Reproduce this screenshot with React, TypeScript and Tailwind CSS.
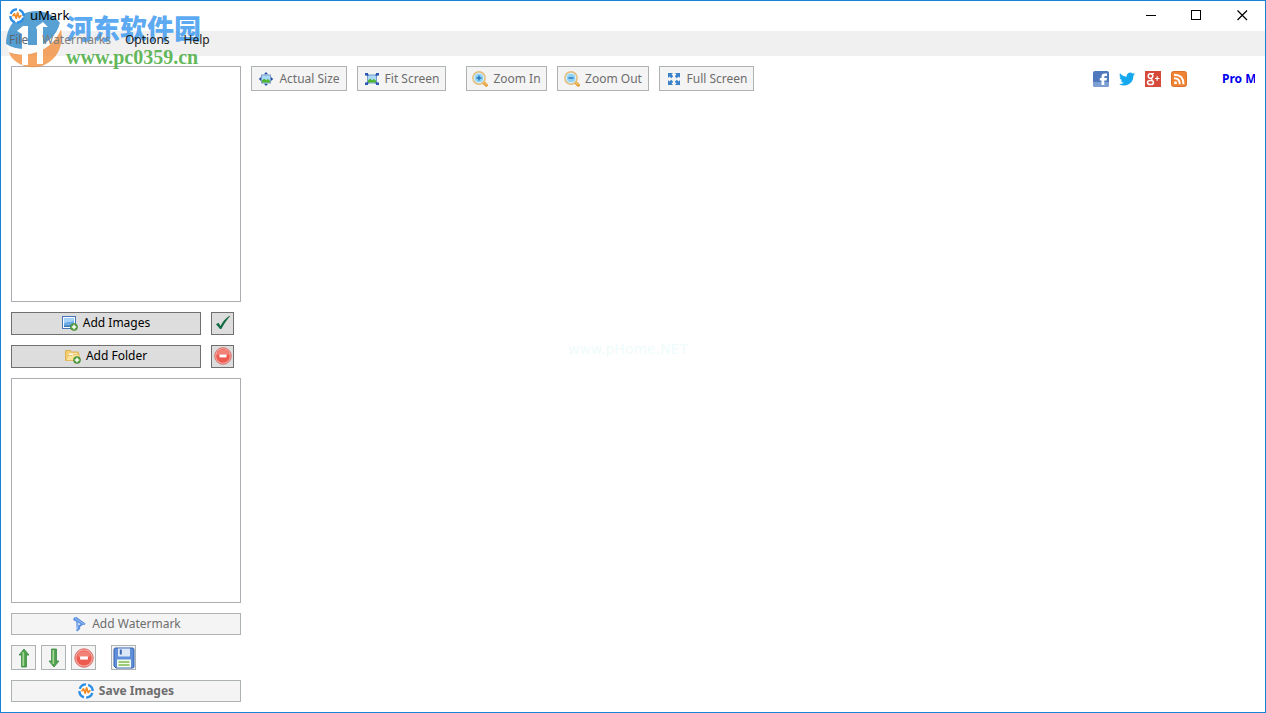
import type { ReactNode } from 'react';

interface IconProps {
  className?: string;
}

function LogoIcon({ className = 'size-4' }: IconProps) {
  return (
    <svg viewBox="0 0 16 16" className={className} fill="none">
      <circle cx="8" cy="8" r="6.3" fill="#fff" />
      <circle
        cx="8"
        cy="8"
        r="6.6"
        stroke="#2e8fe6"
        strokeWidth="2.4"
        strokeDasharray="8.2 2.17"
        strokeDashoffset="-2"
      />
      <path
        d="M3.6 8.2l1.9-2.4 1.7 4.4 1.4-5.4 1.6 4.8 2.2-2.4"
        stroke="#f28a24"
        strokeWidth="1.7"
        strokeLinejoin="round"
      />
    </svg>
  );
}

function Picture() {
  return (
    <>
      <rect x="3.5" y="4" width="9" height="8" fill="#a9d8f8" stroke="#7b9fc4" />
      <path d="M4 11.5V9.3l2.2-1.6 2 1.6 1.6-1.2 2.2 1.6v1.8z" fill="#4fb52f" />
    </>
  );
}

function ActualSizeIcon() {
  return (
    <svg viewBox="0 0 16 16" className="size-4">
      <Picture />
      <path
        d="M8 1l2 2.200H6zM8 15l2-2.200H6zM.8 8L3 6v4zM15.200 8L13 6v4z"
        fill="#2348a8"
      />
    </svg>
  );
}

function FitScreenIcon() {
  return (
    <svg viewBox="0 0 16 16" className="size-4">
      <Picture />
      <path
        d="M1 2h3v1.2L5 4 3.5 5.2 2.5 4.500H1zM15 2h-3v1.200L11 4l1.500 1.200 1-.7H15zM1 14h3v-1.200L5 12l-1.500-1.200-1 .7H1zM15 14h-3v-1.200L11 12l1.500-1.200 1 .7H15z"
        fill="#2c55b4"
      />
    </svg>
  );
}

function ZoomIcon({ plus }: { plus?: boolean }) {
  return (
    <svg viewBox="0 0 16 16" className="size-4">
      <path d="M11.500 11.500l2.800 2.600" stroke="#e09a34" strokeWidth="3.200" strokeLinecap="round" />
      <path d="M11.600 11.200l2.700 2.400" stroke="#f9c765" strokeWidth="1.200" strokeLinecap="round" />
      <circle cx="7" cy="7" r="6.100" fill="#8fd2f5" stroke="#e6be7c" strokeWidth="1.600" />
      <circle cx="7" cy="7" r="4.800" fill="none" stroke="#e5f5fd" strokeWidth="1" />
      <path d={plus ? 'M4.500 7h5M7 4.500v5' : 'M4.500 7h5'} stroke="#2474b8" strokeWidth="1.400" />
    </svg>
  );
}

function FullScreenIcon() {
  return (
    <svg viewBox="0 0 16 16" className="size-4" fill="#3a80cb">
      <path d="M2 2h5L5.600 3.400 7.200 5.200 5.200 7.200 3.400 5.600 2 7z" />
      <path d="M14 2H9l1.400 1.400-1.600 1.800 2 2 1.800-1.600L14 7z" />
      <path d="M2 14h5l-1.400-1.400 1.600-1.800-2-2-1.800 1.600L2 9z" />
      <path d="M14 14H9l1.400-1.400-1.600-1.800 2-2 1.800 1.600L14 9z" />
    </svg>
  );
}

function PlusBadge() {
  return (
    <>
      <circle cx="12" cy="12" r="3.500" fill="#5ba540" stroke="#37752a" strokeWidth=".6" />
      <path d="M9.800 12h4.400M12 9.800v4.400" stroke="#fff" strokeWidth="1.400" />
    </>
  );
}

function AddImagesIcon() {
  return (
    <svg viewBox="0 0 16 16" className="size-4">
      <rect x=".5" y="1.500" width="13" height="12" fill="#f4faff" stroke="#4777b5" />
      <rect x="2" y="3" width="10" height="9" fill="#6aabe6" />
      <path d="M2 8.500c4-3 6 0 10-3V3H2z" fill="#a6d1f6" />
      <path d="M2 10.500h10V12H2z" fill="#3f79b5" />
      <PlusBadge />
    </svg>
  );
}

function AddFolderIcon() {
  return (
    <svg viewBox="0 0 16 16" className="size-4">
      <path d="M.5 12.500v-10h5l1 1.500h7v8.500z" fill="#f4cf70" stroke="#dcb055" />
      <path d="M4 5.500h8v3H4z" fill="#fff" />
      <path d="M.8 12.500L3 7.500h4l1-1h6.500l-1 6z" fill="#fbe49a" stroke="#e3b95c" strokeWidth=".8" />
      <PlusBadge />
    </svg>
  );
}

function CheckIcon() {
  return (
    <svg viewBox="0 0 16 16" className="size-4">
      <path d="M1 9.300l2.500-1.600 2 3.200C7.600 7 10.300 3.500 14.500.8l.5.4C11.500 5 9 9.300 6.400 14H5z" fill="#156b43" />
    </svg>
  );
}

function RemoveIcon({ className = 'size-[18px]' }: IconProps) {
  return (
    <svg viewBox="0 0 18 18" className={className}>
      <circle cx="9" cy="9" r="8.300" fill="#f7a79f" stroke="#d2605a" strokeWidth=".8" />
      <circle cx="9" cy="9" r="6.800" fill="#ec5a50" />
      <path d="M3 7.500a6.200 6.200 0 0 1 12 0q-6 2.500-12 0z" fill="#f28178" />
      <path d="M5.500 7.600h7v2.800h-7z" fill="#fff" />
    </svg>
  );
}

function WatermarkIcon() {
  return (
    <svg viewBox="0 0 16 16" className="size-4">
      <path
        d="M3 1.500L5.500 1 14.500 7.500l-.8 1.600-1.700-.4-3 2.300.2 2-3 2.500-1.200-1.300L5.700 13 5 5.500 2 4z"
        fill="#5f93e2"
      />
      <path d="M7 6.700l.5 2.800 2-1.500z" fill="#f3f3f3" />
      <path d="M4 2.500l9 5.500M5.800 5.500l1 8" stroke="#9dc0f5" strokeWidth=".9" />
    </svg>
  );
}

function ArrowIcon({ down }: { down?: boolean }) {
  return (
    <svg viewBox="0 0 12 20" className="h-5 w-3">
      <path
        d={down ? 'M3.500 1h5v12H11l-5 6-5-6h2.500z' : 'M3.500 19h5V7H11L6 1 1 7h2.500z'}
        fill="#4fa04c"
        stroke="#3b8a42"
        strokeWidth=".8"
      />
      <path d={down ? 'M5.300 2v14' : 'M5.300 18V4'} stroke="#a4d698" strokeWidth="1.700" />
    </svg>
  );
}

function FloppyIcon() {
  return (
    <svg viewBox="0 0 22 22" className="size-[22px]">
      <path d="M1 2.500Q1 1 2.500 1h17Q21 1 21 2.500v17q0 1.500-1.500 1.500H3l-2-2z" fill="#5f8fd9" stroke="#3561ad" />
      <path d="M5 1.500h12v8H5z" fill="#dbe7f7" />
      <path d="M6.800 2.500h2v5h-2z" fill="#3c68b4" />
      <path d="M4 12.500h14v8H4z" fill="#f5f9ee" />
      <path d="M5.500 15h11M5.500 18h11" stroke="#9ccb78" strokeWidth="2" />
    </svg>
  );
}

function FacebookIcon() {
  return (
    <svg viewBox="0 0 16 16" className="size-4">
      <rect width="16" height="16" rx="2" fill="#5079bd" />
      <path d="M0 11h16v3q0 2-2 2H2q-2 0-2-2z" fill="#7d9fd4" />
      <path d="M8.500 14V9.500H6.800V7h1.700V5.500Q8.500 2.500 11.500 2.500H14V5h-1.700q-1 0-1 1v1H14l-.4 2.500h-2.300V14z" fill="#fff" />
    </svg>
  );
}

function TwitterIcon() {
  return (
    <svg viewBox="0 0 24 24" className="size-4" fill="#15a8ee">
      <path d="M24 4.600a10 10 0 0 1-2.800.8 5 5 0 0 0 2.100-2.700 10 10 0 0 1-3.100 1.200 4.900 4.900 0 0 0-8.400 4.500A14 14 0 0 1 1.700 3.200a4.900 4.900 0 0 0 1.500 6.500 5 5 0 0 1-2.200-.6 4.900 4.900 0 0 0 3.900 4.900 5 5 0 0 1-2.200.1 4.900 4.900 0 0 0 4.600 3.400A10 10 0 0 1 0 19.500a14 14 0 0 0 21.500-12.400A10 10 0 0 0 24 4.600z" />
    </svg>
  );
}

function GooglePlusIcon() {
  return (
    <svg viewBox="0 0 16 16" className="size-4" fill="none">
      <path d="M0 0h16v16H0z" fill="#d64a3b" />
      <circle cx="5.500" cy="5" r="2.300" stroke="#fff" strokeWidth="1.500" />
      <ellipse cx="5.500" cy="11.500" rx="3" ry="2.100" stroke="#fff" strokeWidth="1.500" />
      <path d="M5.500 2.500H9M6 7l1.500 2.500M10 7.500h4.500M12.200 5.200v4.600" stroke="#fff" strokeWidth="1.200" />
    </svg>
  );
}

function RssIcon() {
  return (
    <svg viewBox="0 0 16 16" className="size-4" fill="none">
      <rect x=".5" y=".5" width="15" height="15" rx="2" fill="#ef8233" stroke="#d9712b" />
      <circle cx="4.500" cy="11.700" r="1.500" fill="#fff" />
      <path d="M3 7.300q5.800 0 5.800 5.900M3 3.800q9.500 0 9.500 9.400" stroke="#fff" strokeWidth="1.900" />
    </svg>
  );
}

interface ActionButtonProps {
  icon: ReactNode;
  children: ReactNode;
  className: string;
}

function ActionButton({ icon, children, className }: ActionButtonProps) {
  return (
    <button
      type="button"
      className={`flex shrink-0 items-center justify-center gap-[5px] border leading-4 ${className}`}
    >
      {icon}
      <span>{children}</span>
    </button>
  );
}

interface IconButtonProps {
  label: string;
  children: ReactNode;
  className: string;
}

function IconButton({ label, children, className }: IconButtonProps) {
  return (
    <button
      type="button"
      aria-label={label}
      className={`flex shrink-0 items-center justify-center border ${className}`}
    >
      {children}
    </button>
  );
}

const enabled = 'border-[#707070] bg-[#dddddd] text-black';
const muted = 'border-[#adb2b5] bg-[#f4f4f4] text-[#6d6d6d]';

const menus = [
  { name: 'File', color: 'text-[#5c6670]' },
  { name: 'Watermarks', color: 'text-[#808080]' },
  { name: 'Options', color: 'text-[#202020]' },
  { name: 'Help', color: 'text-[#202020]' },
];

const socials = [
  { name: 'Facebook', icon: <FacebookIcon /> },
  { name: 'Twitter', icon: <TwitterIcon /> },
  { name: 'Google Plus', icon: <GooglePlusIcon /> },
  { name: 'RSS', icon: <RssIcon /> },
];

function TitleBar() {
  return (
    <header className="flex h-[30px] shrink-0 items-center pb-px pl-2">
      <LogoIcon className="relative z-10 size-4" />
      <h1 className="relative z-10 ml-[5px] flex-1 text-[13px]">uMark</h1>
      <button type="button" aria-label="Minimize" className="flex h-full w-[45px] items-center justify-center">
        <svg viewBox="0 0 11 11" className="size-[11px]" stroke="#000" shapeRendering="crispEdges">
          <path d="M0 5.500h10" />
        </svg>
      </button>
      <button type="button" aria-label="Maximize" className="flex h-full w-[45px] items-center justify-center">
        <svg viewBox="0 0 11 11" className="size-[11px]" fill="none" stroke="#000" shapeRendering="crispEdges">
          <path d="M.5.5h9v9h-9z" />
        </svg>
      </button>
      <button type="button" aria-label="Close" className="flex h-full w-[46px] items-center justify-center">
        <svg viewBox="0 0 11 11" className="size-[11px]" stroke="#000" strokeWidth="1.200">
          <path d="M.5.5l9.500 9.500M10 .5L.5 10" />
        </svg>
      </button>
    </header>
  );
}

function MenuBar() {
  return (
    <nav className="flex h-[25px] shrink-0 items-start gap-[14px] bg-[#f0f0f0] pl-2 leading-[18px]">
      {menus.map((menu) => (
        <button type="button" key={menu.name} className={`relative z-10 ${menu.color}`}>
          {menu.name}
        </button>
      ))}
    </nav>
  );
}

function Sidebar() {
  return (
    <aside className="flex w-[230px] shrink-0 flex-col gap-[10px]">
      <div role="listbox" aria-label="Images" className="h-[236px] shrink-0 border border-[#abadb3]" />
      <div className="flex gap-[10px]">
        <ActionButton icon={<AddImagesIcon />} className={`h-[23px] w-[190px] pb-px ${enabled}`}>
          Add Images
        </ActionButton>
        <IconButton label="Check all" className={`size-[23px] pb-px ${enabled}`}>
          <CheckIcon />
        </IconButton>
      </div>
      <div className="flex gap-[10px]">
        <ActionButton icon={<AddFolderIcon />} className={`h-[23px] w-[190px] pb-px ${enabled}`}>
          Add Folder
        </ActionButton>
        <IconButton label="Remove image" className={`size-[23px] pb-px ${enabled}`}>
          <RemoveIcon />
        </IconButton>
      </div>
      <div role="listbox" aria-label="Watermarks" className="min-h-40 flex-1 border border-[#abadb3]" />
      <ActionButton icon={<WatermarkIcon />} className={`h-[22px] pb-px ${muted}`}>
        Add Watermark
      </ActionButton>
      <div className="flex gap-[5px]">
        <IconButton label="Move up" className={`size-[25px] ${muted}`}>
          <ArrowIcon />
        </IconButton>
        <IconButton label="Move down" className={`size-[25px] ${muted}`}>
          <ArrowIcon down />
        </IconButton>
        <IconButton label="Remove watermark" className={`size-[25px] ${muted}`}>
          <RemoveIcon className="size-5" />
        </IconButton>
        <IconButton label="Save watermark" className={`ml-[10px] size-[25px] ${muted}`}>
          <FloppyIcon />
        </IconButton>
      </div>
      <ActionButton icon={<LogoIcon />} className={`h-[22px] pb-px font-bold ${muted}`}>
        Save Images
      </ActionButton>
    </aside>
  );
}

function Toolbar() {
  return (
    <div className="flex h-[25px] items-center">
      <div className="flex h-full gap-[10px]">
        <ActionButton icon={<ActualSizeIcon />} className={`w-24 ${muted}`}>
          Actual Size
        </ActionButton>
        <ActionButton icon={<FitScreenIcon />} className={`w-[89px] ${muted}`}>
          Fit Screen
        </ActionButton>
        <ActionButton icon={<ZoomIcon plus />} className={`ml-[10px] w-[81px] ${muted}`}>
          Zoom In
        </ActionButton>
        <ActionButton icon={<ZoomIcon />} className={`w-[92px] ${muted}`}>
          Zoom Out
        </ActionButton>
        <ActionButton icon={<FullScreenIcon />} className={`w-[95px] ${muted}`}>
          Full Screen
        </ActionButton>
      </div>
      <div className="ml-auto flex gap-[10px]">
        {socials.map((item) => (
          <a href="#" key={item.name} aria-label={item.name}>
            {item.icon}
          </a>
        ))}
      </div>
      <a href="#" className="ml-[35px] w-[33px] overflow-hidden whitespace-nowrap font-bold text-[#0000ee]">
        Pro Mode
      </a>
    </div>
  );
}

function SiteStamp() {
  return (
    <div className="pointer-events-none absolute left-1 top-[9px] flex gap-[3px]">
      <svg viewBox="0 0 58 58" className="size-[58px] opacity-80">
        <path d="M1 34C1 15 14 1 31 1C42 1 50 6 55 13C52 26 41 35 28 38C18 40 8 39 1 34z" fill="#2f8acb" />
        <path d="M4 42C18 48 46 44 56 19C59 36 52 48 41 54C33 59 20 58 13 53C8 50 5 46 4 42z" fill="#f3913f" />
        <path d="M1 34C8 39 18 40 28 38C41 35 52 26 55 13L56 19C46 44 18 48 4 42z" fill="#fff" />
        <path d="M12 21L18 16H23V55H17V24zM31 17L38 12L43 17H38V54H32V39H23V35H32V20z" fill="#fff" />
      </svg>
      <div className="whitespace-nowrap">
        <p className="pt-[2px] font-['Noto_Sans_CJK_SC',sans-serif] text-[27px] font-black leading-[32px] text-[#3f9bf0]/85">
          河东软件园
        </p>
        <p className="pt-[2px] font-['Liberation_Serif',serif] text-[20px] font-bold leading-[22px] text-[#4fae45]/90">
          www.pc0359.cn
        </p>
      </div>
    </div>
  );
}

function App() {
  return (
    <div className="relative flex min-h-screen flex-col border border-[#1883d7] bg-white font-['Noto_Sans',sans-serif] text-[12px] text-black">
      <TitleBar />
      <MenuBar />
      <div className="flex flex-1 gap-[10px] p-[10px]">
        <Sidebar />
        <main className="flex min-w-0 flex-1 flex-col">
          <Toolbar />
          <div className="flex flex-1 justify-center pt-[248px]">
            <p className="mr-[250px] font-['DejaVu_Sans',sans-serif] text-[14px] leading-5 text-[#f0fbfb]">
              www.pHome.NET
            </p>
          </div>
        </main>
      </div>
      <SiteStamp />
    </div>
  );
}
export default App;
